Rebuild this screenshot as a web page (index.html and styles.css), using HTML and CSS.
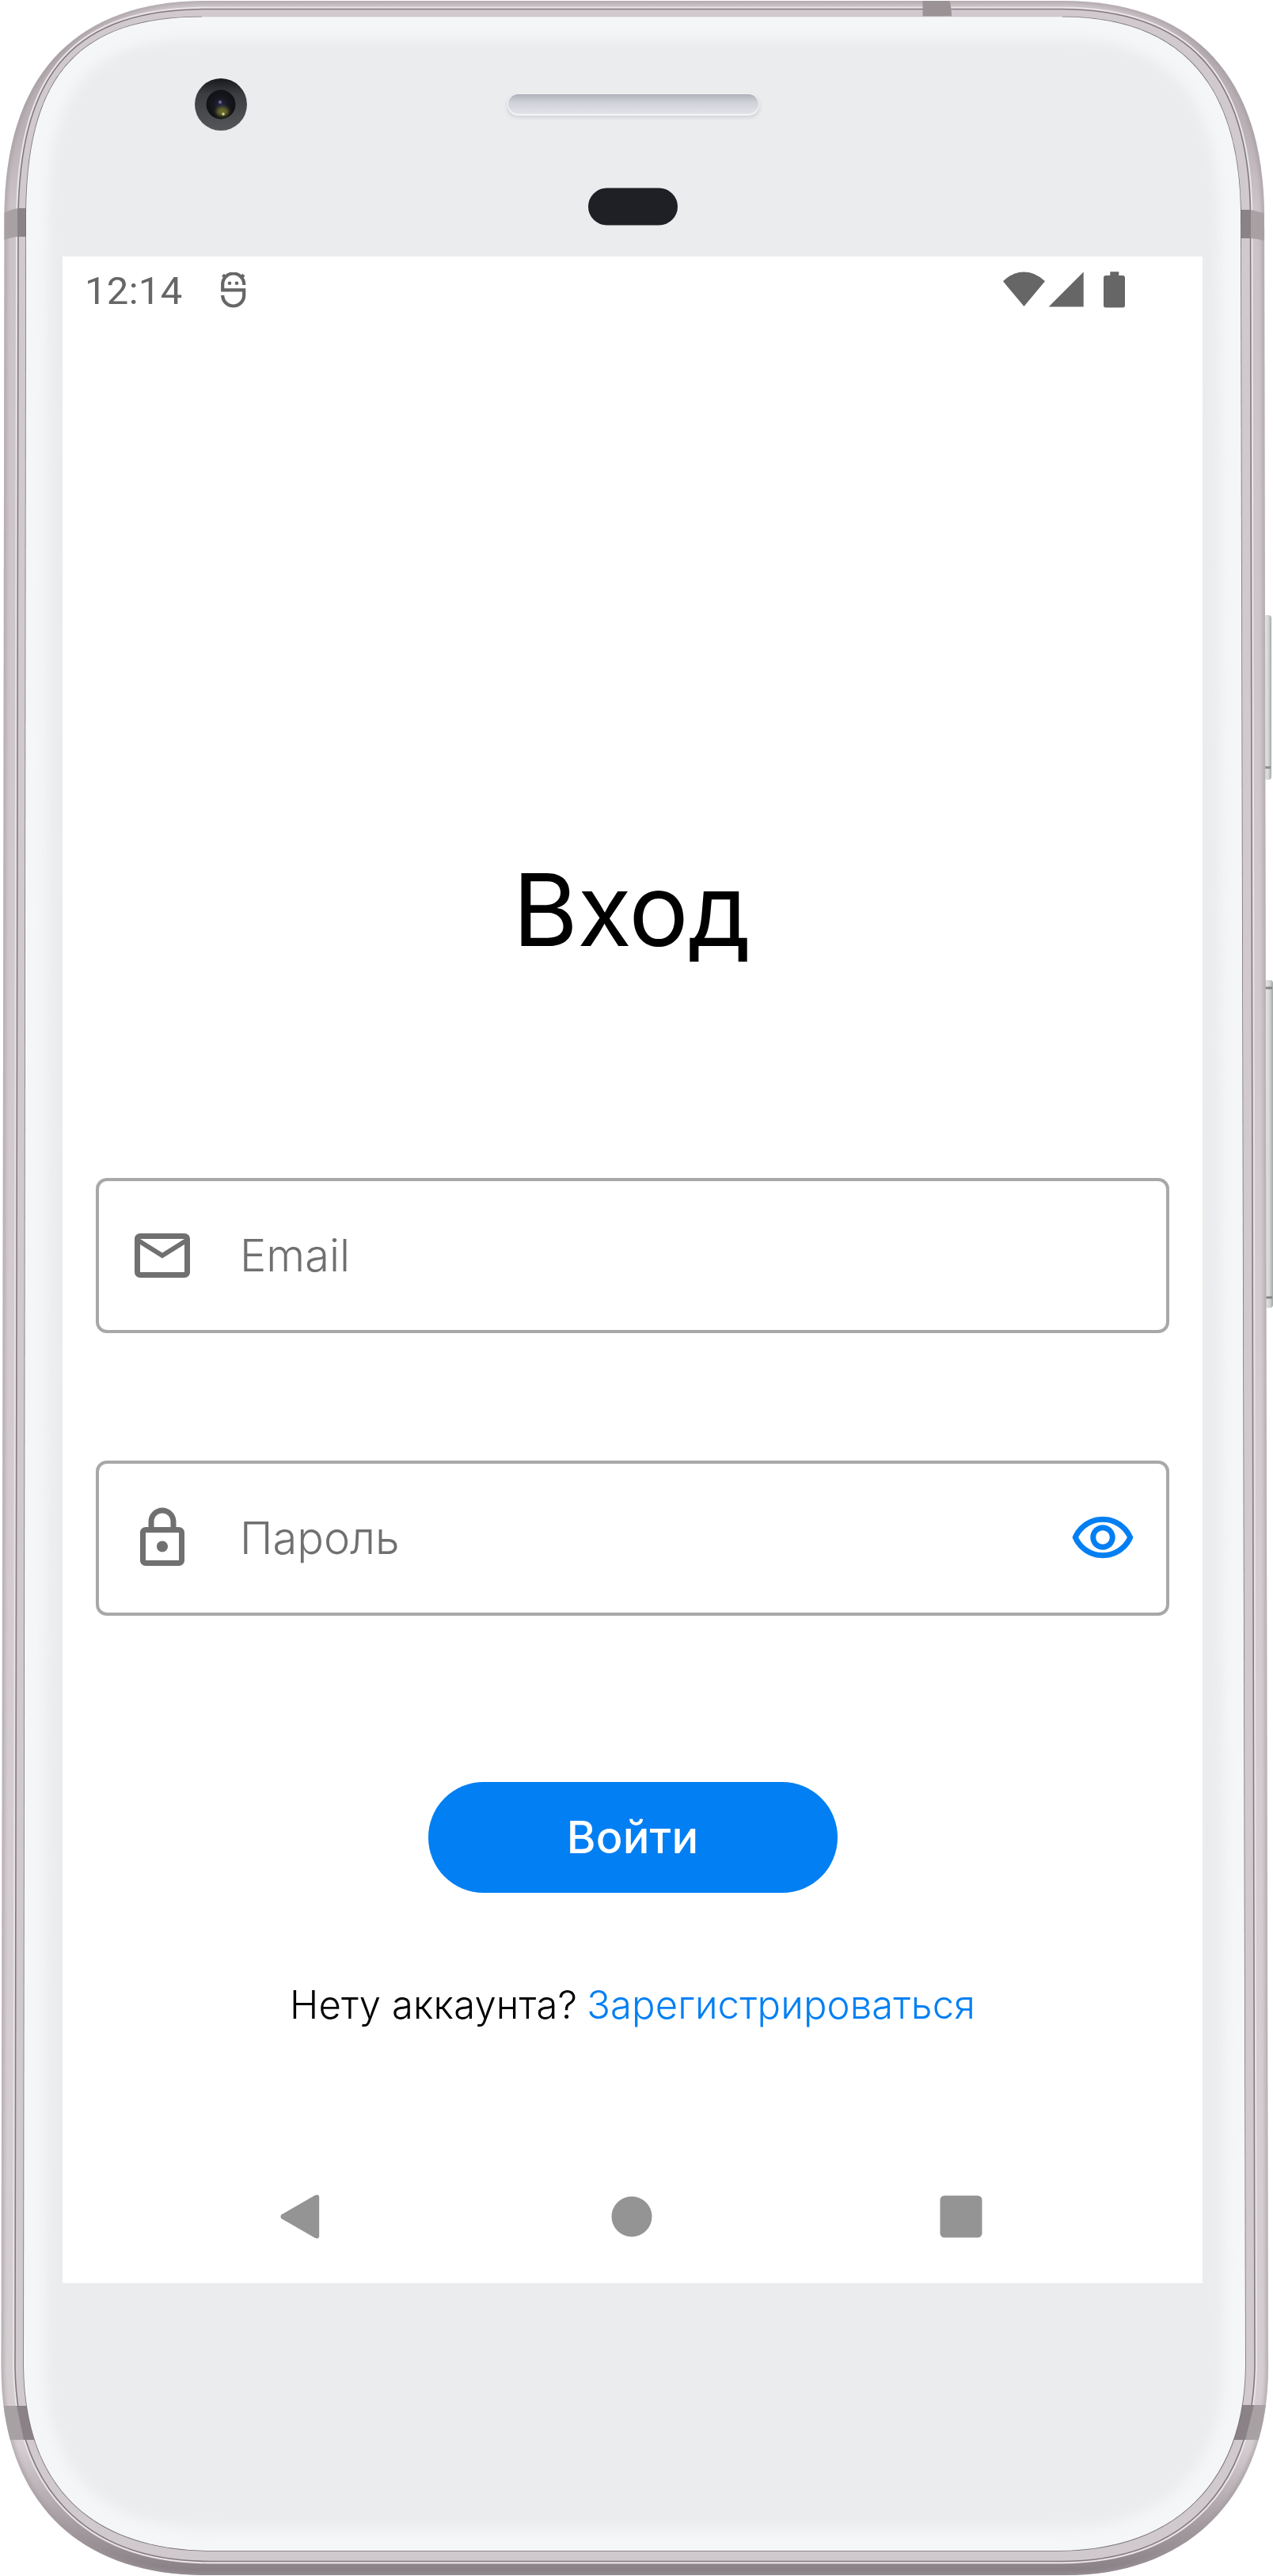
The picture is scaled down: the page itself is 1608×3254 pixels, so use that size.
FILE: index.html
```html
<!DOCTYPE html>
<html lang="ru">
<head>
<meta charset="utf-8">
<title>Вход</title>
<link rel="stylesheet" href="styles.css">
</head>
<body>
<div class="phone">
  <svg class="phone-body" width="1608" height="3254" viewBox="0 0 1608 3254" aria-hidden="true">
    <defs>
      <linearGradient id="metal" x1="0" y1="0" x2="0" y2="1">
        <stop offset="0" stop-color="#cdc6ca"/>
        <stop offset=".02" stop-color="#b5adb2"/>
        <stop offset=".05" stop-color="#b9b1b5"/>
        <stop offset=".08" stop-color="#cbc3c7"/>
        <stop offset=".5" stop-color="#d3cbd0"/>
        <stop offset=".95" stop-color="#d5ced1"/>
        <stop offset=".98" stop-color="#a69da2"/>
        <stop offset="1" stop-color="#877e84"/>
      </linearGradient>
      <linearGradient id="slot" x1="0" y1="0" x2="0" y2="1">
        <stop offset="0" stop-color="#aeb1ba"/>
        <stop offset=".4" stop-color="#cfd1d8"/>
        <stop offset="1" stop-color="#e2e3e8"/>
      </linearGradient>
      <linearGradient id="key" x1="0" y1="0" x2="1" y2="0">
        <stop offset="0" stop-color="#b9bbb9"/>
        <stop offset=".35" stop-color="#e4e7e4"/>
        <stop offset=".7" stop-color="#d3d6d3"/>
        <stop offset="1" stop-color="#a7a9a8"/>
      </linearGradient>
      <radialGradient id="lens" cx=".5" cy=".5" r=".5">
        <stop offset="0" stop-color="#26264a"/>
        <stop offset=".5" stop-color="#17171f"/>
        <stop offset="1" stop-color="#101114"/>
      </radialGradient>
      <linearGradient id="lens-ring" x1="0" y1="0" x2="0" y2="1">
        <stop offset="0" stop-color="#17181b"/>
        <stop offset=".3" stop-color="#3c3d41"/>
        <stop offset="1" stop-color="#55565a"/>
      </linearGradient>
      <filter id="soft" x="-5%" y="-5%" width="110%" height="110%"><feGaussianBlur stdDeviation="8"/></filter>
      <filter id="soft-sm" x="-50%" y="-50%" width="200%" height="200%"><feGaussianBlur stdDeviation="2"/></filter>
      <path id="shell" d="M5.500 270C7 90 100 1 260 1H1342C1502 1 1595 90 1597 270L1602 2990C1602 3150 1505 3253 1345 3253H260C90 3253 1.500 3150 1.500 2990Z"/>
      <path id="seam" d="M23 270C26 90 95 11.500 262 11.500H1340C1500 11.500 1578 95 1579.500 270L1585 2990C1582 3140 1498 3235.500 1340 3235.500H265C105 3235.500 21 3140 19 2990Z"/>
      <path id="glass" d="M33 270C34 100 95 21.500 255 21.500H1342C1490 21.500 1566 105 1567 270L1573 2990C1571 3130 1490 3222 1335 3222H270C107 3222 32 3133 30 2990Z"/>
      <clipPath id="shell-clip"><use href="#shell"/></clipPath>
      <clipPath id="glass-clip"><use href="#glass"/></clipPath>
    </defs>

    <rect x="1593" y="777" width="13" height="208" rx="4" fill="url(#key)"/>
    <rect x="1597" y="968" width="8" height="3" fill="#8e908f"/>
    <rect x="1593" y="1238" width="15" height="414" rx="4" fill="url(#key)"/>
    <path d="M1597 1248h10M1597 1639h10" stroke="#858786" stroke-width="3"/>

    <use href="#shell" fill="url(#metal)"/>
    <g clip-path="url(#shell-clip)">
      <use href="#shell" fill="none" stroke="#a0979d" stroke-width="7" opacity=".55" filter="url(#soft-sm)"/>
      <use href="#seam" fill="none" stroke="#e8e2e4" stroke-width="6"/>
      <use href="#seam" fill="#d0c9cd" stroke="#817980" stroke-width="1.600"/>
      <path d="M0 272Q10 265 23 263H40V299H23Q10 300 0 306Z" fill="#a8a1a4"/>
      <path d="M22 263H40V299H22Z" fill="#8a8286"/>
      <path d="M1608 274Q1592 267 1580 265H1560V301H1580Q1595 302 1608 309Z" fill="#a8a1a4"/>
      <path d="M1580 265H1560V301H1580Z" fill="#8a8286"/>
      <path d="M0 3039H45V3082H0Z M1608 3038H1555V3082H1608Z" fill="#a8a1a4"/>
      <path d="M21 3039H50V3082H30Z M1584 3038H1550V3082H1573Z" fill="#8a8286"/>
      <path d="M1165.500 0H1199Q1202 8 1202 22H1165.500Z" fill="#9a9295"/>
    </g>
    <use href="#glass" fill="#ebecee" stroke="#79727a" stroke-width="1.600"/>
    <path d="M255 21.500H1342" stroke="#dcd9dc" stroke-width="2"/>
    <g clip-path="url(#glass-clip)">
      <use href="#glass" fill="none" stroke="#f5f6f8" stroke-width="54" filter="url(#soft)"/>
    </g>

    <rect x="640" y="120" width="320" height="29" rx="14" fill="#d5d6da" filter="url(#soft-sm)"/>
    <rect x="641" y="118" width="318" height="28" rx="14" fill="#f4f5f7"/>
    <rect x="642" y="119" width="316" height="25" rx="12.500" fill="url(#slot)"/>
    <rect x="743" y="237.500" width="113" height="47" rx="23.500" fill="#1e2025"/>

    <circle cx="279" cy="132" r="33" fill="url(#lens-ring)"/>
    <circle cx="279" cy="132" r="18.500" fill="url(#lens)"/>
    <ellipse cx="281" cy="141" rx="8" ry="6" fill="#6a6a2c" filter="url(#soft-sm)"/>
    <circle cx="282" cy="144" r="1.800" fill="#d8d09a"/>
    <circle cx="278" cy="129" r="2" fill="#6d6d98"/>
  </svg>

  <main class="screen">
    <header class="status">
      <span class="clock">12:14</span>
      <svg class="status-app" width="32" height="45" viewBox="0 0 32 45">
        <path d="M29.200 16V15A13.500 13.500 0 0 0 2.200 15V22.300H29.200V29A13.500 13.500 0 0 1 2.200 29M2.500 3.200L6.500 7M29 3.200L25 7" fill="none" stroke="#666" stroke-width="4.200"/>
        <circle cx="11" cy="13.800" r="2.300" fill="#666"/><circle cx="20" cy="13.800" r="2.300" fill="#666"/>
      </svg>
      <svg class="status-system" width="156" height="46" viewBox="0 0 156 46" fill="#666">
        <path d="M0 12.300Q12 .500 26.500 .500T53 12.300L26.500 44Z"/>
        <path d="M101.700 .500V44.500H57.700Z"/>
        <path d="M135.300 .300H146.300V5H151Q154 5 154 8V43Q154 45.500 151 45.500H130Q127 45.500 127 43V8Q127 5 130 5H135.300Z"/>
      </svg>
    </header>

    <form class="login">
      <h1 class="title">Вход</h1>
      <label class="field">
        <svg class="field-icon" viewBox="0 0 24 24"><path d="M22 6c0-1.100-.9-2-2-2H4c-1.100 0-2 .9-2 2v12c0 1.100.9 2 2 2h16c1.100 0 2-.9 2-2V6zm-2 0l-8 5-8-5h16zm0 12H4V8l8 5 8-5v10z"/></svg>
        <span class="hint">Email</span>
      </label>
      <label class="field">
        <svg class="field-icon" viewBox="0 0 24 24"><path d="M18 8h-1V6c0-2.760-2.240-5-5-5S7 3.240 7 6v2H6c-1.100 0-2 .9-2 2v10c0 1.100.9 2 2 2h12c1.100 0 2-.9 2-2V10c0-1.100-.9-2-2-2zM9 6c0-1.660 1.340-3 3-3s3 1.340 3 3v2H9V6zm9 14H6V10h12v10zm-6-3c1.100 0 2-.9 2-2s-.9-2-2-2-2 .9-2 2 .9 2 2 2z"/></svg>
        <span class="hint">Пароль</span>
        <svg class="field-eye" viewBox="0 0 24 24"><path d="M12 6.500c3.790 0 7.170 2.130 8.820 5.500-1.650 3.370-5.020 5.500-8.820 5.500S4.830 15.370 3.180 12C4.830 8.630 8.210 6.500 12 6.500m0-2C7 4.500 2.730 7.610 1 12c1.730 4.390 6 7.500 11 7.500s9.270-3.110 11-7.500c-1.730-4.390-6-7.500-11-7.500zm0 5c1.380 0 2.500 1.120 2.500 2.500s-1.120 2.500-2.500 2.500-2.500-1.120-2.500-2.500 1.120-2.500 2.500-2.500m0-2c-2.480 0-4.500 2.020-4.500 4.500s2.020 4.500 4.500 4.500 4.500-2.020 4.500-4.500-2.020-4.500-4.500-4.500z"/></svg>
      </label>
      <button class="submit" type="button">Войти</button>
      <p class="signup"><span class="question">Нету аккаунта?</span><a class="link">Зарегистрироваться</a></p>
    </form>

    <nav class="nav">
      <svg width="50" height="58" viewBox="0 0 50 58"><path d="M1.500 26.500L44 2Q49.200 0 49.200 4.500V53.500Q49.200 58 44 56L1.500 31.500Q-.5 29 1.500 26.500Z"/></svg>
      <svg width="52" height="52" viewBox="0 0 52 52"><circle cx="26" cy="26" r="25.500"/></svg>
      <svg width="54" height="54" viewBox="0 0 54 54"><rect x=".5" y=".5" width="53" height="53" rx="5.500"/></svg>
    </nav>
  </main>
</div>
</body>
</html>
```
FILE: styles.css
```css
* { box-sizing: border-box; }
body { margin: 0; background: #fff; }

.phone {
  position: relative;
  width: 1608px;
  height: 3254px;
  padding: 324px 0 0 79px;
  overflow: hidden;
}
.phone-body { position: absolute; inset: 0; }

.screen {
  position: relative;
  display: flex;
  flex-direction: column;
  width: 1440px;
  height: 2560px;
  background: #fff;
  font-family: Inter, "Noto Sans", sans-serif;
}

.status {
  display: flex;
  align-items: center;
  height: 84px;
  padding: 0 96px 0 28px;
  color: #666;
}
.clock {
  width: 172px;
  padding-top: 3px;
  font: 400 49px/56px Roboto, sans-serif;
  letter-spacing: 0.3px;
}
.status-system { margin-left: auto; }

.login {
  display: flex;
  flex-direction: column;
  align-items: center;
  padding: 665px 42px 0;
}
.title {
  margin: 0 0 263px;
  padding-right: 3px;
  font-size: 126px;
  font-weight: 400;
  line-height: 152px;
  letter-spacing: -0.8px;
  color: #000;
}
.field {
  display: flex;
  align-items: center;
  width: 1356px;
  height: 196px;
  padding: 0 38px;
  border: 4px solid #a8a8a8;
  border-radius: 14px;
}
.field + .field { margin-top: 161px; }
.field-icon { width: 84px; height: 84px; margin-right: 56px; fill: #707070; }
.field-eye { width: 84px; height: 84px; margin: 0 0 3px auto; fill: #027ff3; }
.hint {
  font-size: 56px;
  font-weight: 300;
  line-height: 68px;
  color: #707070;
}
.submit {
  width: 517px;
  height: 140px;
  margin-top: 210px;
  padding: 0;
  border: 0;
  border-radius: 70px;
  background: #027ff3;
  color: #fff;
  font: 500 56px/68px Inter, "Noto Sans", sans-serif;
  letter-spacing: 0.2px;
}
.signup {
  display: flex;
  gap: 12px;
  margin: 112px 0 0;
  font-size: 49px;
  font-weight: 300;
  line-height: 60px;
  letter-spacing: 0.13px;
  color: #000;
  white-space: nowrap;
}
.link { color: #027ff3; }

.nav {
  display: flex;
  align-items: center;
  justify-content: space-between;
  height: 168px;
  margin-top: auto;
  padding: 0 278px 0 275px;
  fill: #949494;
}
.nav svg:nth-child(2) { margin-left: 5px; }
```
